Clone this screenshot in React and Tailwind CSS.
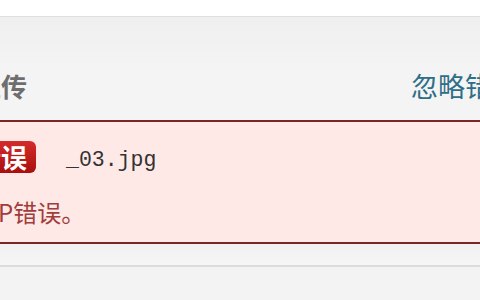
export default function App() {
  const cjk = { fontFamily: '"Noto Sans CJK SC", "Noto Sans", sans-serif' };
  return (
    <div className="w-[480px] h-[300px] overflow-hidden bg-white flex flex-col" style={cjk}>
      <div className="h-4 shrink-0 bg-white" />
      <div className="h-px shrink-0 bg-[#dedede]" />
      <div className="h-[103px] shrink-0 bg-gradient-to-b from-[#efeff0] via-[#f4f4f5] to-[#f4f4f5] flex items-start pt-[53px] overflow-hidden">
        <span className="text-[26px] leading-[32px] font-bold text-[#6e6e6e] whitespace-nowrap -ml-[25px]">上传</span>
        <span className="ml-auto -mr-[39px] text-[27px] leading-[32px] text-[#2e6e86] whitespace-nowrap">忽略错误</span>
      </div>
      <div className="h-[124px] shrink-0 border-y-2 border-[#7a2626] bg-[#ffe9e7] flex flex-col pt-[16px] overflow-hidden">
        <div className="flex items-center">
          <span className="-ml-[31px] h-8 pl-[6px] pr-[9px] rounded-[6px] bg-gradient-to-b from-[#d62a2a] to-[#a80e0e] text-white font-bold text-[26px] leading-8 whitespace-nowrap">错误</span>
          <span className="ml-[30px] text-[21.5px] leading-8 text-[#333333] pt-[6px]" style={{ fontFamily: '"Liberation Mono", monospace' }}>_03.jpg</span>
        </div>
        <div className="mt-[22px] -ml-[2px] text-[24px] leading-[28px] text-[#a23c3c] whitespace-nowrap">P错误。</div>
      </div>
      <div className="h-[21px] shrink-0 bg-gradient-to-b from-[#f0f0f0] to-[#f6f6f6]" />
      <div className="h-[2px] shrink-0 bg-[#dcdcdc]" />
      <div className="flex-1 bg-[#f3f3f3]" />
    </div>
  );
}
